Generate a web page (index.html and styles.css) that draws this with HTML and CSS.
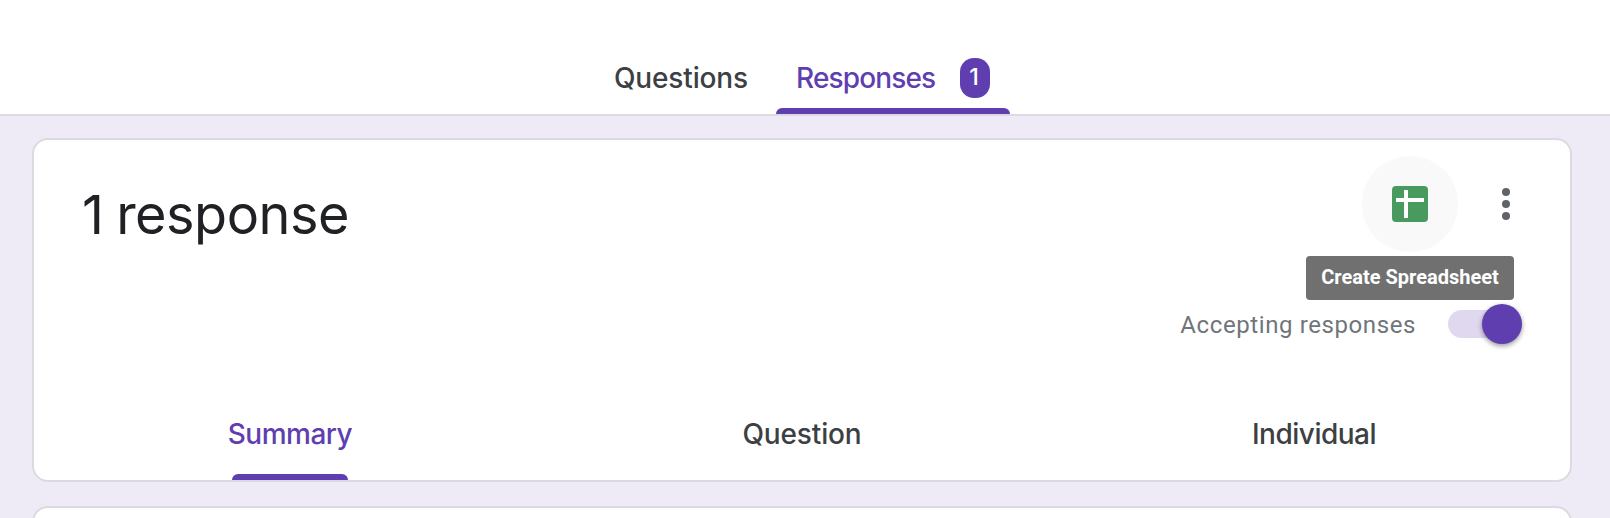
FILE: index.html
```html
<!DOCTYPE html>
<html lang="en">
<head>
<meta charset="utf-8">
<title>Responses</title>
<link rel="stylesheet" href="styles.css">
</head>
<body>
<header class="header">
  <nav class="main-tabs">
    <a class="main-tab"><span class="t-questions">Questions</span></a>
    <a class="main-tab main-tab-active"><span class="t-responses">Responses</span><span class="badge">1</span></a>
  </nav>
</header>
<main class="content">
  <section class="card summary-card">
    <div class="card-head">
      <h1 class="title">1 response</h1>
      <div class="side">
        <div class="actions">
          <div class="sheet-button">
            <svg width="36" height="36" viewBox="0 0 36 36"><rect width="36" height="36" rx="4" fill="#489a5f"/><path d="M4 12h28v4H4zM12 4h4v28h-4z" fill="#fff"/></svg>
            <div class="tooltip"><span>Create Spreadsheet</span></div>
          </div>
          <div class="menu-button">
            <svg width="8" height="32" viewBox="0 0 8 32" fill="#5f6368"><circle cx="4" cy="4" r="4"/><circle cx="4" cy="16" r="4"/><circle cx="4" cy="28" r="4"/></svg>
          </div>
        </div>
        <div class="accepting">
          <span class="accepting-label">Accepting responses</span>
          <div class="toggle"><div class="thumb"></div></div>
        </div>
      </div>
    </div>
    <nav class="sub-tabs">
      <a class="sub-tab sub-tab-active"><span class="t-summary">Summary</span></a>
      <a class="sub-tab"><span class="t-question">Question</span></a>
      <a class="sub-tab"><span class="t-individual">Individual</span></a>
    </nav>
  </section>
  <section class="card next-card"></section>
</main>
</body>
</html>
```
FILE: styles.css
```css
* { box-sizing: border-box; }
body {
  margin: 0;
  background: #eeebf6;
  font-family: Inter, "Liberation Sans", sans-serif;
  color: #3c4043;
}
.header {
  height: 116px;
  background: #fff;
  border-bottom: 2px solid #dadbe0;
  display: flex;
  align-items: flex-end;
}
.main-tabs {
  display: flex;
  margin-left: 586px;
  font-size: 28px;
  font-weight: 500;
  line-height: 40px;
}
.main-tab {
  display: flex;
  width: 190px;
  height: 56px;
  padding-left: 28px;
  white-space: nowrap;
}
.main-tab-active {
  width: 234px;
  padding-left: 20px;
  padding-right: 20px;
  justify-content: space-between;
  flex-wrap: wrap;
  color: #5f3fb0;
}
.main-tab-active::after,
.sub-tab-active::after {
  content: "";
  height: 6px;
  background: #5f3fb0;
  border-radius: 6px 6px 0 0;
}
.main-tab-active::after {
  flex: 0 0 234px;
  margin: 10px -20px 0;
}
.badge {
  width: 30px;
  height: 40px;
  padding-right: 2px;
  border-radius: 14px;
  background: #5f3fb0;
  color: #fff;
  font-size: 23px;
  line-height: 39px;
  text-align: center;
}
.content {
  display: flex;
  flex-direction: column;
  gap: 24px;
  height: 402px;
  overflow: hidden;
  padding: 22px 38px 0 32px;
}
.card {
  flex-shrink: 0;
  background: #fff;
  border: 2px solid #dadbe0;
  border-radius: 16px;
}
.summary-card {
  display: flex;
  flex-direction: column;
  justify-content: space-between;
  height: 344px;
}
.next-card { height: 120px; }
.card-head {
  display: flex;
  justify-content: space-between;
  padding: 16px 16px 0 48px;
}
.title {
  margin: 26px 0 0;
  font-size: 54px;
  line-height: 66px;
  font-weight: 400;
  letter-spacing: -0.5px;
  word-spacing: -2px;
  color: #202124;
  white-space: nowrap;
}
.side {
  display: flex;
  flex-direction: column;
  align-items: flex-end;
}
.actions { display: flex; }
.sheet-button, .menu-button {
  display: flex;
  align-items: center;
  justify-content: center;
  width: 96px;
  height: 96px;
  border-radius: 50%;
}
.sheet-button {
  position: relative;
  background: #f9f9f9;
}
.tooltip {
  position: absolute;
  top: 100px;
  left: -56px;
  width: 208px;
  height: 44px;
  border-radius: 4px;
  background: #707070;
  color: #fff;
  font: 700 20px/42px Roboto, sans-serif;
  text-align: center;
  white-space: nowrap;
}
.accepting {
  display: flex;
  align-items: center;
  gap: 32px;
  margin: 52px 32px 0 0;
  height: 40px;
}
.accepting-label {
  font: 400 24px/40px Roboto, sans-serif;
  letter-spacing: 0.6px;
  color: #70757a;
  padding-top: 2px;
  white-space: nowrap;
}
.toggle {
  display: flex;
  align-items: center;
  justify-content: flex-end;
  width: 74px;
  height: 28px;
  border-radius: 14px;
  background: #e0d8ef;
}
.thumb {
  width: 40px;
  height: 40px;
  flex-shrink: 0;
  border-radius: 50%;
  background: #5f3fb0;
  box-shadow: 0 2px 5px rgba(0, 0, 0, 0.4);
}
.sub-tabs {
  display: grid;
  grid-template-columns: repeat(3, 1fr);
  font-size: 28px;
  font-weight: 500;
  line-height: 40px;
}
.sub-tab {
  display: flex;
  flex-direction: column;
  align-items: center;
  height: 66px;
  justify-content: space-between;
}
.sub-tab-active { color: #5f3fb0; }
.sub-tab-active::after { width: 116px; }
.t-questions, .t-question { letter-spacing: -0.15px; }
.t-responses { letter-spacing: -0.85px; }
.t-summary, .t-individual { letter-spacing: -0.5px; }
```
